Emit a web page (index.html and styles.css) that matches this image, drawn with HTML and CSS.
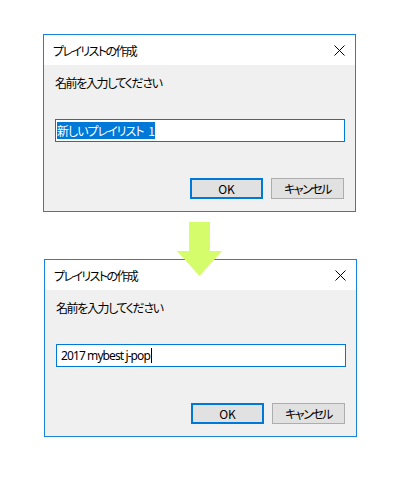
FILE: index.html
```html
<!DOCTYPE html>
<html lang="ja">
<head>
    <meta charset="UTF-8" />
    <title>プレイリストの作成</title>
    <link rel="stylesheet" href="styles.css">
</head>
<body>

<div class="page">
    <div class="dialog first">
        <div class="titlebar">
            <span>プレイリストの作成</span>
            <svg class="close" width="11" height="11" viewBox="0 0 11 11">
                <path d="M0.5 0.5 L10.5 10.5 M10.5 0.5 L0.5 10.5" stroke="#000" stroke-width="1" fill="none"/>
            </svg>
        </div>
        <div class="content">
            <p class="label">名前を入力してください</p>
            <div class="input"><span class="selected">新しいプレイリスト 1</span></div>
            <div class="buttons">
                <button class="btn primary">OK</button>
                <button class="btn">キャンセル</button>
            </div>
        </div>
    </div>

    <div class="dialog second">
        <div class="titlebar">
            <span>プレイリストの作成</span>
            <svg class="close" width="11" height="11" viewBox="0 0 11 11">
                <path d="M0.5 0.5 L10.5 10.5 M10.5 0.5 L0.5 10.5" stroke="#000" stroke-width="1" fill="none"/>
            </svg>
        </div>
        <div class="content">
            <p class="label">名前を入力してください</p>
            <div class="input"><span class="typed">2017 mybest j-pop</span><span class="caret"></span></div>
            <div class="buttons">
                <button class="btn primary">OK</button>
                <button class="btn">キャンセル</button>
            </div>
        </div>
    </div>

    <!-- arrow drawn over the second dialog's title bar -->
    <svg class="arrow" width="45" height="54" viewBox="0 0 45 54">
        <polygon points="12,0 33,0 33,29 45,29 22.5,54 0,29 12,29" fill="#d4fc6b"/>
    </svg>
</div>

</body>
</html>
```

FILE: styles.css
```css
body {
    margin: 0;
    padding: 0;
    background-color: #fff;
    font-family: "Noto Sans CJK JP", "Noto Sans", sans-serif;
    font-size: 12px;
    color: #000;
}

.page {
    position: relative;
    width: 400px;
    height: 500px;
    padding-top: 34px;
    box-sizing: border-box;
}

.dialog {
    width: 313px;
    border: 1px solid #1883d7;
    box-sizing: border-box;
    background-color: #f0f0f0;
}

.dialog.first {
    margin-left: 43px;
}

.dialog.second {
    margin-left: 44px;
    margin-top: 47px;
}

.titlebar {
    height: 30px;
    background-color: #fff;
    display: flex;
    align-items: center;
    justify-content: space-between;
    padding: 0 10px 0 9px;
    font-feature-settings: "palt";
    letter-spacing: -1.6px;
}

.content {
    padding: 10px 10px 12px 11px;
}

.label {
    margin: 0;
    line-height: 16px;
    font-feature-settings: "palt";
    letter-spacing: -1.4px;
}

.input {
    margin-top: 28px;
    height: 23px;
    border: 1px solid #0078d7;
    background-color: #fff;
    box-sizing: border-box;
    display: flex;
    align-items: center;
    padding-left: 1px;
}

.selected {
    background-color: #0078d7;
    color: #fff;
    line-height: 17px;
    font-feature-settings: "palt";
    letter-spacing: -1px;
    word-spacing: 3px;
    padding-right: 1px;
}

.typed {
    padding-left: 3px;
    line-height: 17px;
    font-family: "Noto Sans", sans-serif;
    letter-spacing: -0.9px;
}

.caret {
    width: 1px;
    height: 15px;
    margin-left: 1px;
    background-color: #000;
}

.buttons {
    margin-top: 36px;
    display: flex;
    justify-content: flex-end;
    gap: 8px;
    padding-right: 1px;
}

.btn {
    width: 73px;
    height: 21px;
    padding: 0;
    background-color: #e1e1e1;
    border: 1px solid #adadad;
    font-family: inherit;
    font-size: 12px;
    color: #000;
    font-feature-settings: "palt";
    letter-spacing: -1.5px;
}

.btn.primary {
    border: 2px solid #0078d7;
    letter-spacing: 0;
}

.arrow {
    position: absolute;
    left: 177px;
    top: 222px;
}
```
